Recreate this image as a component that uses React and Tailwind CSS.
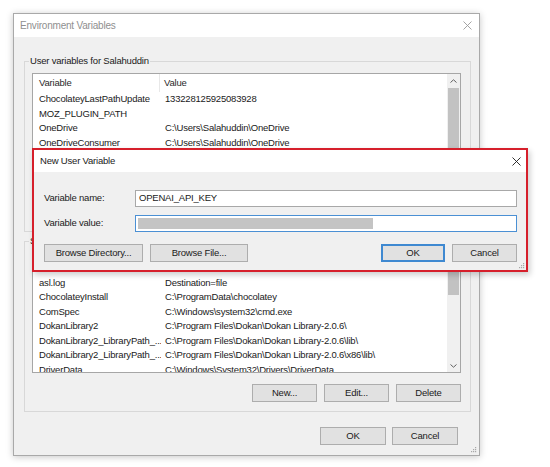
const userRows = [
  ["ChocolateyLastPathUpdate", "133228125925083928"],
  ["MOZ_PLUGIN_PATH", ""],
  ["OneDrive", "C:\\Users\\Salahuddin\\OneDrive"],
  ["OneDriveConsumer", "C:\\Users\\Salahuddin\\OneDrive"],
  ["Path", "C:\\Users\\Salahuddin\\AppData\\Local\\Microsoft\\WindowsApps;"],
  ["TEMP", "C:\\Users\\Salahuddin\\AppData\\Local\\Temp"],
  ["TMP", "C:\\Users\\Salahuddin\\AppData\\Local\\Temp"],
];

const systemRows = [
  ["ACSvcPort", "17532"],
  ["asl.log", "Destination=file"],
  ["ChocolateyInstall", "C:\\ProgramData\\chocolatey"],
  ["ComSpec", "C:\\Windows\\system32\\cmd.exe"],
  ["DokanLibrary2", "C:\\Program Files\\Dokan\\Dokan Library-2.0.6\\"],
  ["DokanLibrary2_LibraryPath_...", "C:\\Program Files\\Dokan\\Dokan Library-2.0.6\\lib\\"],
  ["DokanLibrary2_LibraryPath_...", "C:\\Program Files\\Dokan\\Dokan Library-2.0.6\\x86\\lib\\"],
  ["DriverData", "C:\\Windows\\System32\\Drivers\\DriverData"],
  ["NUMBER_OF_PROCESSORS", "8"],
];

function Chevron({ up }) {
  return (
    <svg width="7" height="4" viewBox="0 0 7 4" className="text-[#606060]">
      <path
        d={up ? "M0.5 3.5 L3.5 0.8 L6.5 3.5" : "M0.5 0.5 L3.5 3.2 L6.5 0.5"}
        fill="none"
        stroke="currentColor"
        strokeWidth="1"
      />
    </svg>
  );
}

function Grip() {
  return (
    <svg width="7" height="7" viewBox="0 0 7 7">
      {[
        [5, 1],
        [3, 3],
        [5, 3],
        [1, 5],
        [3, 5],
        [5, 5],
      ].map(([x, y], i) => (
        <rect key={i} x={x} y={y} width="1.2" height="1.2" fill="#a8a8a8" />
      ))}
    </svg>
  );
}

function Btn({ children, w, primary }) {
  return (
    <div
      className={`${w} h-[18px] flex items-center justify-center bg-[#e1e1e1] ${
        primary ? "border-2 border-[#3f89d1]" : "border border-[#adadad]"
      }`}
    >
      {children}
    </div>
  );
}

function VarList({ rows, scrolled }) {
  return (
    <div className="h-[120px] border border-[#a6a6a6] bg-white flex">
      <div className="flex-1 flex flex-col overflow-hidden">
        {/* header */}
        <div className="h-[18px] shrink-0 flex items-center text-[#2a2a2a]">
          <div className="w-[127px] h-full pl-[6px] flex items-center border-r border-[#e8e8e8]">
            Variable
          </div>
          <div className="pl-[4px]">Value</div>
        </div>
        <div className="flex-1 overflow-hidden">
          <div className={scrolled ? "mt-[-10.75px]" : ""}>
            {rows.map(([name, value], i) => (
              <div key={i} className="h-[14.5px] flex items-center whitespace-nowrap">
                <div className="w-[128px] shrink-0 pl-[6px] pr-[2px] overflow-hidden">{name}</div>
                <div className="pl-[4px]">{value}</div>
              </div>
            ))}
          </div>
        </div>
      </div>
      {/* scrollbar */}
      <div className="w-[13px] bg-[#f0f0f0] flex flex-col">
        <div className="h-[13px] flex items-center justify-center">
          <Chevron up />
        </div>
        <div className="flex-1 px-[1px]">
          {scrolled ? (
            <div className="h-[28px] bg-[#c2c2c2]" />
          ) : (
            <div className="mt-[1px] h-[70px] bg-[#c2c2c2]" />
          )}
        </div>
        <div className="h-[13px] flex items-center justify-center">
          <Chevron />
        </div>
      </div>
    </div>
  );
}

function Group({ title, rows, scrolled, className }) {
  return (
    <fieldset className={`border border-[#d8d8d8] pl-[7px] pr-[9px] pt-[6px] pb-[9px] ${className}`}>
      <legend className="ml-[-3px] px-[1px] h-[12px] leading-[12px]">{title}</legend>
      <VarList rows={rows} scrolled={scrolled} />
      <div className="mt-[11px] flex justify-end gap-[7px]">
        <Btn w="w-[65px]">New...</Btn>
        <Btn w="w-[65px]">Edit...</Btn>
        <Btn w="w-[65px]">Delete</Btn>
      </div>
    </fieldset>
  );
}

export default function App() {
  return (
    <div className="relative w-[550px] h-[467px] overflow-hidden bg-white font-['Liberation_Sans',Arial,sans-serif] text-[9.5px] tracking-[-0.2px] text-[#1a1a1a]">
      {/* Environment Variables window */}
      <div className="ml-[13px] mt-[13px] w-[467px] h-[443px] border border-[#a9a9a9] bg-[#f0f0f0] shadow-[0_1px_7px_rgba(0,0,0,0.22)] flex flex-col">
        <div className="h-[23px] shrink-0 bg-white flex items-center justify-between pl-[6px] pr-[7px] text-[#8f8f8f] text-[10px]">
          <span>Environment Variables</span>
          <svg width="9" height="9" viewBox="0 0 9 9">
            <path d="M0.5 0.5 L8.5 8.5 M8.5 0.5 L0.5 8.5" stroke="#9a9a9a" strokeWidth="0.9" />
          </svg>
        </div>
        <div className="flex-1 flex flex-col pl-[10px] pr-[8px] pt-[18px] relative">
          <Group title="User variables for Salahuddin" rows={userRows} />
          <Group title="System variables" rows={systemRows} scrolled className="mt-[3px]" />
          <div className="mt-[15px] mr-[13px] flex justify-end gap-[6px]">
            <Btn w="w-[66px]">OK</Btn>
            <Btn w="w-[66px]">Cancel</Btn>
          </div>
          <div className="absolute right-[2px] bottom-[2px]">
            <Grip />
          </div>
        </div>
      </div>

      {/* New User Variable dialog */}
      <div className="absolute left-[32px] top-[148px] w-[496px] h-[124px] border-2 border-[#d61f2b] bg-[#f0f0f0] shadow-[2px_3px_6px_rgba(0,0,0,0.2)] flex flex-col">
        <div className="h-[22px] shrink-0 bg-white flex items-center justify-between pl-[6px] pr-[5px]">
          <span>New User Variable</span>
          <svg width="9" height="9" viewBox="0 0 9 9">
            <path d="M0.5 0.5 L8.5 8.5 M8.5 0.5 L0.5 8.5" stroke="#1a1a1a" strokeWidth="0.9" />
          </svg>
        </div>
        <div className="flex-1 flex flex-col pl-[10px] pr-[9px] pt-[18px] relative">
          <div className="flex items-center">
            <div className="w-[91px]">Variable name:</div>
            <div className="flex-1 h-[17px] border border-[#a8a8a8] bg-white flex items-center pl-[3px]">
              OPENAI_API_KEY
            </div>
          </div>
          <div className="mt-[8px] flex items-center">
            <div className="w-[91px]">Variable value:</div>
            <div className="flex-1 h-[17px] border border-[#4b90d4] bg-white p-[2px]">
              <div className="w-[235px] h-full bg-[#c4c4c4]" />
            </div>
          </div>
          <div className="mt-[12px] flex items-center">
            <Btn w="w-[99px]">Browse Directory...</Btn>
            <div className="ml-[7px]">
              <Btn w="w-[98px]">Browse File...</Btn>
            </div>
            <div className="ml-auto flex gap-[7px]">
              <Btn w="w-[64px]" primary>
                OK
              </Btn>
              <Btn w="w-[65px]">Cancel</Btn>
            </div>
          </div>
          <div className="absolute right-[1px] bottom-[1px]">
            <Grip />
          </div>
        </div>
      </div>
    </div>
  );
}
